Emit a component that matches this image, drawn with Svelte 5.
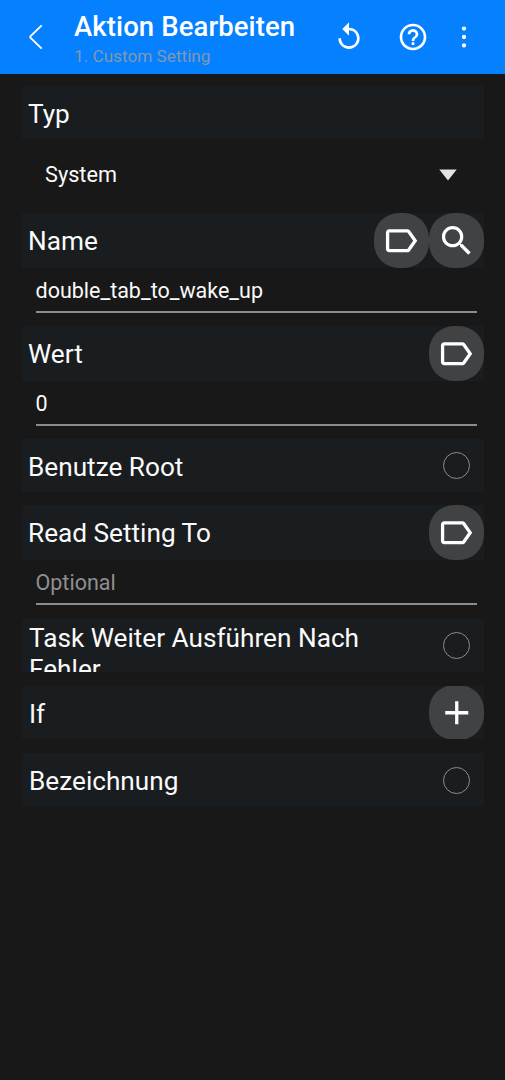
<script>
  const paths = {
    tag: 'M17.63 5.84C17.27 5.33 16.67 5 16 5L5 5.01C3.9 5.01 3 5.9 3 7v10c0 1.1.9 1.99 2 1.99L16 19c.67 0 1.27-.33 1.63-.84L22 12l-4.37-6.16zM16 17H5V7h11l3.55 5L16 17z',
    search: 'M15.5 14h-.79l-.28-.27C15.41 12.59 16 11.11 16 9.5 16 5.91 13.09 3 9.5 3S3 5.91 3 9.5 5.91 16 9.5 16c1.61 0 3.09-.59 4.23-1.57l.27.28v.79l5 4.99L20.49 19l-4.99-5zm-6 0C7.01 14 5 11.99 5 9.5S7.01 5 9.5 5 14 7.01 14 9.5 11.99 14 9.5 14z',
    plus: 'M19 13h-6v6h-2v-6H5v-2h6V5h2v6h6v2z'
  };
</script>

{#snippet action(name, label)}
  <button class="action {name}" aria-label={label}>
    <svg width="39.5" height="39.5" viewBox="0 0 24 24" fill="currentColor"><path d={paths[name]} /></svg>
  </button>
{/snippet}

<div class="screen">
  <header>
    <button class="back" aria-label="Zurück">
      <svg width="16" height="28" viewBox="0 0 16 28" fill="none" stroke="currentColor" stroke-width="1.9" stroke-linejoin="round">
        <path d="M13.7 2.4 2.6 13.1q-.9.9 0 1.8L13.7 25.6" />
      </svg>
    </button>
    <div class="titles">
      <h1>Aktion Bearbeiten</h1>
      <p>1. Custom Setting</p>
    </div>
    <nav>
      <svg width="32" height="32" viewBox="0 0 24 24" fill="currentColor"><path d="M12 5V1L7 6l5 5V7c3.31 0 6 2.69 6 6s-2.69 6-6 6-6-2.69-6-6H4c0 4.42 3.58 8 8 8s8-3.58 8-8-3.58-8-8-8z" /></svg>
      <svg width="32" height="32" viewBox="0 0 24 24" fill="currentColor"><path d="M11 18h2v-2h-2v2zm1-16C6.48 2 2 6.48 2 12s4.48 10 10 10 10-4.48 10-10S17.52 2 12 2zm0 18c-4.41 0-8-3.59-8-8s3.59-8 8-8 8 3.59 8 8-3.59 8-8 8zm0-14c-2.21 0-4 1.79-4 4h2c0-1.1.9-2 2-2s2 .9 2 2c0 2-3 1.75-3 5h2c0-2.25 3-2.5 3-5 0-2.21-1.79-4-4-4z" /></svg>
      <svg class="more" width="6" height="24" viewBox="0 0 6 24" fill="currentColor"><circle cx="3" cy="3.6" r="2.15" /><circle cx="3" cy="12" r="2.15" /><circle cx="3" cy="20.4" r="2.15" /></svg>
    </nav>
  </header>

  <main>
    <div class="row"><span class="label">Typ</span></div>
    <div class="select">
      <span>System</span>
      <svg width="18" height="12" viewBox="0 0 18 12"><path d="M.3.5h17.4L9 11.5z" fill="#e2e2e2" /></svg>
    </div>

    <div class="row tall">
      <span class="label">Name</span>
      {@render action('tag', 'Variable')}
      {@render action('search', 'Suchen')}
    </div>
    <div class="field"><span>double_tab_to_wake_up</span></div>

    <div class="row tall">
      <span class="label">Wert</span>
      {@render action('tag', 'Variable')}
    </div>
    <div class="field"><span>0</span></div>

    <div class="row root"><span class="label">Benutze Root</span><i class="radio"></i></div>

    <div class="row tall">
      <span class="label">Read Setting To</span>
      {@render action('tag', 'Variable')}
    </div>
    <div class="field last"><span class="hint">Optional</span></div>

    <div class="row inset wrap"><span class="label">Task Weiter Ausführen Nach Fehler</span><i class="radio"></i></div>
    <div class="row inset">
      <span class="label">If</span>
      {@render action('plus', 'Hinzufügen')}
    </div>
    <div class="row inset"><span class="label">Bezeichnung</span><i class="radio"></i></div>
  </main>
</div>

<style>
  :global(body) { background: #181818; }
  .screen {
    width: 505px;
    height: 1080px;
    overflow: hidden;
    box-sizing: border-box;
    background: #181818;
    color: #fafafa;
    font-family: Roboto, sans-serif;
  }
  button { border: 0; padding: 0; background: none; color: #fff; }
  svg { display: block; flex: none; }
  header {
    display: flex;
    height: 74px;
    background: #0580ff;
    color: #fff;
  }
  .back { width: 74px; padding: 0 0 0 28px; flex: none; }
  .titles { flex: 1; min-width: 0; padding-top: 11px; white-space: nowrap; }
  h1 { margin: 0; font-size: 27.5px; line-height: 32px; font-weight: 500; letter-spacing: .1px; }
  p { margin: 2px 0 0; font-size: 17.2px; line-height: 22px; color: #8398ae; }
  nav { display: flex; align-items: center; padding-right: 38px; }
  nav svg + svg { margin-left: 32px; }
  main { display: flex; flex-direction: column; padding: 12px 21px 0 22px; }
  .row {
    display: flex;
    flex: none;
    align-items: center;
    height: 53px;
    padding-left: 6px;
    overflow: hidden;
    background: #191d20;
  }
  .row.tall { height: 55px; }
  .row.root { margin-bottom: 13px; }
  .row.inset { padding-left: 7px; margin-bottom: 14px; }
  .label { flex: 1; font-size: 26.2px; line-height: 31px; padding-top: 3px; }
  .row.tall .label { padding-top: 1px; }
  .wrap { align-items: flex-start; }
  .wrap .label { padding: 4px 50px 0 0; }
  .wrap .radio { margin-top: 13px; }
  .inset:last-child .radio { margin-top: 1px; }
  .action {
    display: flex;
    align-items: center;
    justify-content: center;
    flex: none;
    box-sizing: border-box;
    width: 55px;
    height: 55px;
    border-radius: 25px;
    background: #414244;
  }
  .tag { padding-right: 1.4px; }
  .row.inset .action { padding-top: 1px; }
  .radio {
    flex: none;
    box-sizing: border-box;
    width: 27px;
    height: 27px;
    margin-right: 14px;
    border: 1.3px solid #8b8d8e;
    border-radius: 50%;
  }
  .select {
    display: flex;
    align-items: center;
    justify-content: space-between;
    height: 74px;
    padding: 0 27px 4px 23px;
    box-sizing: border-box;
    font-size: 21.7px;
  }
  .select svg { margin-top: 1px; }
  .field {
    box-sizing: border-box;
    height: 45px;
    margin: 0 7px 13px 13.5px;
    border-bottom: 2px solid #8c8c8c;
    font-size: 21.5px;
    line-height: 45px;
  }
  .field.last { margin-bottom: 14px; }
  .hint { color: #8f8f8f; }
</style>
